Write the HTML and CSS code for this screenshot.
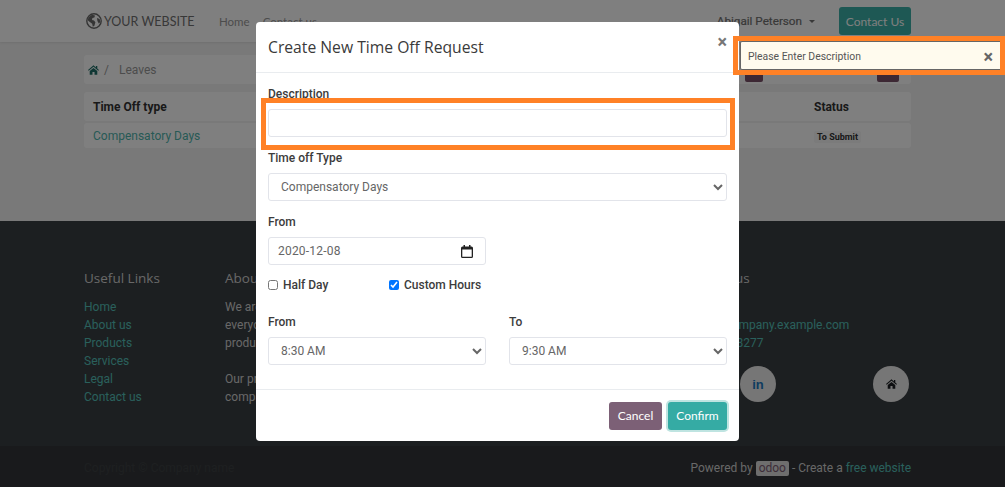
FILE: index.html
```html
<!DOCTYPE html>
<html lang="en">
<head>
<meta charset="utf-8">
<title>Leaves</title>
<link rel="stylesheet" href="styles.css">
</head>
<body>
<div class="page">
  <header class="topbar">
    <a class="brand">
      <svg class="globe" viewBox="0 0 16 16" width="16" height="16"><circle cx="8" cy="8" r="7.2" fill="none" stroke="#6a6a6a" stroke-width="1.4"/><path d="M3 4l3-2.200 3 .6-.6 2-2 .6-.4 2 2 .6 1.400 1.600-1 3.600-1.600 1-.6-3-2.400-1.800L1.400 7z M11 5l2.600 1 .8 3-1.600 1.600-1.400-2.600z" fill="#6a6a6a"/></svg>
      <span>YOUR WEBSITE</span>
    </a>
    <nav class="nav"><a>Home</a><a>Contact us</a></nav>
    <div class="user">Abigail Peterson<i class="caret"></i></div>
    <a class="contact-btn">Contact Us</a>
  </header>
  <main class="content">
    <div class="crumbs">
      <div class="crumb-left">
        <svg class="crumb-home" viewBox="0 0 16 14" width="11" height="10"><path d="M8 0L0 7l1 1.200L8 2.400l7 5.800L16 7l-2.500-2.100V1h-2v2.200zM2.500 8.500V14h4v-4h3v4h4V8.500L8 4z" fill="#1f6f68"/></svg>
        <span class="sep">/</span><span class="crumb-text">Leaves</span>
      </div>
      <div class="crumb-search"><span class="sq"></span><span class="field"></span><span class="sq wide"></span></div>
    </div>
    <table class="grid">
      <thead><tr><th class="c1">Time Off type</th><th class="c2">Duration Days</th><th class="c3">Status</th></tr></thead>
      <tbody><tr><td class="c1"><a>Compensatory Days</a></td><td class="c2">1</td><td class="c3"><span class="badge">To Submit</span></td></tr></tbody>
    </table>
  </main>
  <footer class="foot">
    <div class="foot-cols">
      <section class="col links">
        <h5>Useful Links</h5>
        <ul><li>Home</li><li>About us</li><li>Products</li><li>Services</li><li>Legal</li><li>Contact us</li></ul>
      </section>
      <section class="col about">
        <h5>About us</h5>
        <p>We are a team of passionate people whose goal is to improve<br>everyone's life through disruptive products. We build great<br>products to solve your business problems.</p>
        <p>Our products are designed for small to medium size<br>companies willing to optimize their performance.</p>
      </section>
      <section class="col connect">
        <h5>Connect with us</h5>
        <ul class="mail"><li class="mail-a">info@yourcompany.example.com</li><li class="mail-b">+1 (650) 555-8277</li></ul>
        <div class="socials">
          <span class="social"><b class="in">in</b></span>
          <span class="social"><svg viewBox="0 0 16 14" width="11" height="10"><path d="M8 0L0 7l1 1.200L8 2.400l7 5.800L16 7l-2.500-2.100V1h-2v2.200zM2.500 8.500V14h4v-4h3v4h4V8.500L8 4z" fill="#1c1f22"/></svg></span>
        </div>
      </section>
    </div>
    <div class="copy">
      <span class="copy-left">Copyright © Company name</span>
      <span class="powered">Powered by <span class="odoo">odoo</span> - Create a <a>free website</a></span>
    </div>
  </footer>
</div>
<div class="backdrop"></div>
<div class="modal">
  <div class="modal-head"><h4>Create New Time Off Request</h4><span class="close">×</span></div>
  <form class="modal-body">
    <label class="lbl">Description</label>
    <input class="ctl" type="text">
    <label class="lbl gap">Time off Type</label>
    <select class="ctl"><option>Compensatory Days</option></select>
    <label class="lbl gap">From</label>
    <div class="ctl half date"><span>2020-12-08</span>
      <svg viewBox="0 0 12 13" width="12" height="13"><path d="M2.500 0v1.500H1.500A1.500 1.500 0 0 0 0 3v8.500A1.500 1.500 0 0 0 1.500 13h9a1.500 1.500 0 0 0 1.500-1.500V3a1.500 1.500 0 0 0-1.500-1.500h-1V0H8v1.500H4V0zM1.300 4.500h9.400v7.200H1.300z" fill="#222"/></svg>
    </div>
    <div class="checks">
      <label class="chk"><input type="checkbox"> Half Day</label>
      <label class="chk"><input type="checkbox" checked> Custom Hours</label>
    </div>
    <div class="hours">
      <div><label class="lbl">From</label><select class="ctl"><option>8:30 AM</option></select></div>
      <div><label class="lbl">To</label><select class="ctl"><option>9:30 AM</option></select></div>
    </div>
  </form>
  <div class="modal-foot"><button class="btn cancel" type="button">Cancel</button><button class="btn confirm" type="button">Confirm</button></div>
</div>
<div class="toast"><span>Please Enter Description</span><span class="toast-x">×</span></div>
<div class="mark mark-toast"></div>
<div class="mark mark-input"></div>
</body>
</html>
```
FILE: styles.css
```css
* { box-sizing: border-box; }
html, body { margin: 0; height: 487px; overflow: hidden; }
body { font-family: Roboto, "Liberation Sans", sans-serif; font-size: 12px; color: #212529; background: #f2f2f2; position: relative; }
a { text-decoration: none; }
.page { width: 1005px; height: 487px; display: flex; flex-direction: column; }

.topbar { height: 42px; background: #fff; display: flex; align-items: center; padding: 0 94px 0 86px; box-shadow: 0 1px 2px rgba(0,0,0,.08); }
.brand { display: flex; align-items: center; gap: 2px; font-family: Lato, sans-serif; font-size: 12.500px; color: #707070; width: 133px; }
.nav { display: flex; gap: 13px; font-family: Lato, sans-serif; font-size: 11.500px; color: #999; flex: 1; }
.user { font-size: 11.700px; font-weight: 400; color: #707070; display: flex; align-items: center; margin-right: 24px; -webkit-text-stroke: .2px #707070; }
.caret { margin-left: 7px; border: 3.500px solid transparent; border-top-color: #707070; border-bottom: 0; }
.contact-btn { background: #3cb1a8; color: #fff; font-family: Lato, sans-serif; font-size: 12px; height: 28px; width: 72px; border-radius: 3px; display: flex; align-items: center; justify-content: center; }

.content { height: 179px; padding: 13px 94px 0 84px; }
.crumbs { height: 29px; background: #fff; border-radius: 3px; display: flex; align-items: center; justify-content: space-between; padding: 0 12px 0 4px; }
.crumb-left { display: flex; align-items: center; color: #999; font-size: 12px; }
.sep { margin: 0 10px 0 5px; }
.crumb-search { display: flex; align-items: stretch; height: 19px; margin-top: 5px; }
.sq { width: 18px; background: #7a5068; border-radius: 2px; }
.sq.wide { width: 22px; }
.field { width: 114px; background: #fff; }
.grid { width: 100%; margin-top: 6px; border-collapse: separate; border-spacing: 0 2px; table-layout: fixed; }
.grid th, .grid td { background: #fff; padding: 0 9px; text-align: left; }
.grid th { height: 29px; font-size: 12px; font-weight: 700; color: #333; }
.grid td { height: 25px; }
.grid .c1 { width: 600px; border-radius: 3px 0 0 3px; }
.grid .c1 a { color: #4fb4ac; }
.grid .c2 { width: 121px; color: transparent; padding-left: 0; }
.grid .c3 { border-radius: 0 3px 3px 0; padding-left: 9px; }
.badge { display: inline-block; font-size: 9px; font-weight: 700; color: #333; background: #f6f6f6; padding: 1px 3px; border-radius: 2px; }

.foot { flex: 1; background: #393e42; color: #d0d0d0; display: flex; flex-direction: column; }
.foot-cols { height: 225px; display: grid; grid-template-columns: 141px 424px 1fr; padding: 48px 94px 0 84px; }
.col h5 { margin: 0 0 11px; font-family: "Open Sans", sans-serif; font-weight: 400; font-size: 13.500px; line-height: 18px; }
.col ul { list-style: none; margin: 0; padding: 0; }
.col li, .col p { font-size: 12px; line-height: 18px; }
.col p { margin: 0 0 18px; white-space: nowrap; }
.links li, .mail li { color: #54c0b8; }
.col .mail { padding-top: 18px; }
.mail-a { padding-left: 22px; }
.mail-b { padding-left: 16px; }
.socials { display: flex; justify-content: space-between; width: 169px; margin: 14px 0 0 91px; }
.social { width: 36px; height: 36px; border-radius: 50%; background: #ececec; display: flex; align-items: center; justify-content: center; }
.in { font-size: 13px; color: #1c78c0; font-family: "Liberation Sans", sans-serif; }
.copy { flex: 1; background: #323538; display: flex; align-items: center; justify-content: space-between; padding: 3px 94px 0 84px; }
.copy-left { color: #3d4043; }
.powered { color: #d0d0d0; }
.powered a { color: #54c0b8; }
.odoo { display: inline-block; background: #dcdcdc; color: #7a5a72; border-radius: 2px; padding: 0 3px; line-height: 15px; }

.backdrop { position: absolute; inset: 0; background: rgba(0,0,0,.5); }

.modal { position: absolute; left: 256px; top: 22px; width: 483px; height: 419px; background: #fff; border-radius: 4px; display: flex; flex-direction: column; }
.modal-head { height: 51px; border-bottom: 1px solid #e9ecef; padding: 0 12px; display: flex; align-items: center; justify-content: space-between; }
.modal-head h4 { margin: 0; font-family: "Open Sans", sans-serif; font-weight: 400; font-size: 15.700px; color: #3a3a3a; }
.close { font-size: 18px; font-weight: 700; color: #777; margin-top: -11px; line-height: 1; }
.modal-body { flex: 1; padding: 13px 12px 0; display: flex; flex-direction: column; }
.lbl { display: block; font-size: 12px; font-weight: 500; line-height: 14px; padding-top: 1px; height: 15px; margin-bottom: 8px; color: #3c3c3c; }
.gap { margin-top: 13px; }
.ctl { display: block; width: 100%; height: 28px; border: 1px solid #e2e4ea; border-radius: 3px; background: #fff; font-family: Roboto, sans-serif; font-size: 12px; color: #666; padding: 0 8px; }
.half { width: 218px; }
.date { display: flex; align-items: center; justify-content: space-between; padding: 0 12px 0 9px; letter-spacing: .2px; }
.checks { display: grid; grid-template-columns: 121px 1fr; margin-top: 13px; height: 14px; }
.chk { display: flex; align-items: center; font-size: 12px; font-weight: 500; color: #3c3c3c; gap: 5px; }
.chk input { margin: 0; width: 10px; height: 10px; }
.hours { display: grid; grid-template-columns: 218px 218px; gap: 23px; margin-top: 22px; }
.modal-foot { height: 52px; border-top: 1px solid #e9ecef; display: flex; justify-content: flex-end; align-items: center; gap: 6px; padding: 0 12px; }
.btn { border: 0; border-radius: 3px; height: 28px; color: #fff; font-family: Lato, sans-serif; font-size: 12px; padding: 0; }
.cancel { width: 53px; background: #7c6076; }
.confirm { width: 59px; background: #35aba4; box-shadow: 0 0 0 2px #bfe4e1; }

.toast { position: absolute; left: 740px; top: 41px; width: 262px; height: 29px; background: #fffbee; border: 1px solid #666; border-radius: 2px; display: flex; align-items: center; justify-content: space-between; padding: 1px 8px 0 7px; font-size: 10.400px; color: #555; }
.toast-x { font-size: 18px; font-weight: 700; color: #666; margin-top: 1px; }
.mark { position: absolute; border: 5px solid #ff8126; }
.mark-toast { left: 733px; top: 36px; width: 272px; height: 39px; }
.mark-input { left: 261px; top: 98px; width: 474px; height: 52px; }
```
